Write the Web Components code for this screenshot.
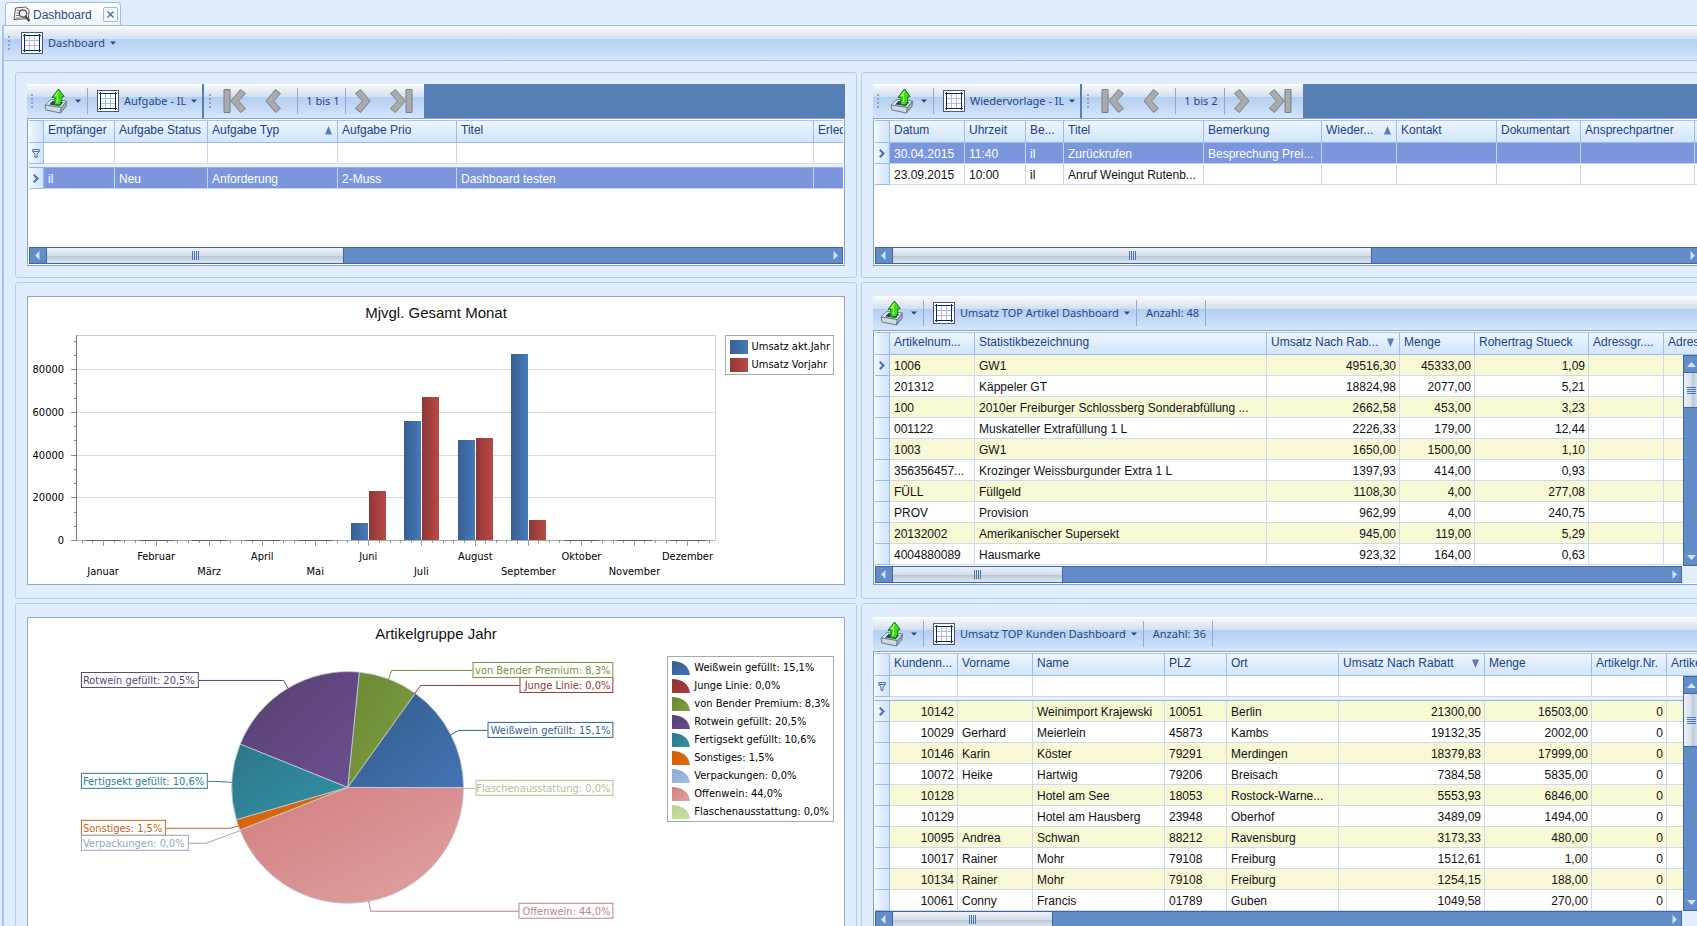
<!DOCTYPE html>
<html lang="de">
<head>
<meta charset="utf-8">
<title>Dashboard</title>
<style>
  html, body { height: 100%; margin: 0; overflow: hidden; }
  body {
    background: #e1edfd;
    color: #111;
    font: 12px/20px "Liberation Sans", Arial, sans-serif;
    --ink: #20418a;
    --line: #a9c5ea;
    --strip: linear-gradient(#fcfdfe 0, #eef2f7 4px, #d2deee 13px, #b3cff1 13px, #c2d8f5 23px, #d6e6fb 100%);
  }
</style>
</head>
<body>
<dash-window>
  <doc-tab slot="tabs">Dashboard</doc-tab>
  <tool-bar slot="bar" class="main">
    <tool-strip grip><tool-menu icon="table">Dashboard</tool-menu></tool-strip>
  </tool-bar>

  <dash-group>
    <tool-bar docked>
      <tool-strip grip boxed><tool-menu icon="export" label="Exportieren"></tool-menu><tool-sep></tool-sep><tool-menu icon="table">Aufgabe - IL</tool-menu></tool-strip>
      <record-nav>1 bis 1</record-nav>
    </tool-bar>
    <data-grid source="aufgaben"></data-grid>
  </dash-group>

  <dash-group>
    <tool-bar docked>
      <tool-strip grip boxed><tool-menu icon="export" label="Exportieren"></tool-menu><tool-sep></tool-sep><tool-menu icon="table">Wiedervorlage - IL</tool-menu></tool-strip>
      <record-nav>1 bis 2</record-nav>
    </tool-bar>
    <data-grid source="wiedervorlagen"></data-grid>
  </dash-group>

  <dash-group tall><bar-chart></bar-chart></dash-group>

  <dash-group tall>
    <tool-bar>
      <tool-strip><tool-menu icon="export" label="Exportieren"></tool-menu><tool-sep></tool-sep><tool-menu icon="table">Umsatz TOP Artikel Dashboard</tool-menu><tool-sep></tool-sep><tool-text>Anzahl: 48</tool-text><tool-sep></tool-sep></tool-strip>
    </tool-bar>
    <data-grid source="artikel"></data-grid>
  </dash-group>

  <dash-group tall><pie-chart></pie-chart></dash-group>

  <dash-group tall>
    <tool-bar>
      <tool-strip><tool-menu icon="export" label="Exportieren"></tool-menu><tool-sep></tool-sep><tool-menu icon="table">Umsatz TOP Kunden Dashboard</tool-menu><tool-sep></tool-sep><tool-text>Anzahl: 36</tool-text><tool-sep></tool-sep></tool-strip>
    </tool-bar>
    <data-grid source="kunden"></data-grid>
  </dash-group>
</dash-window>

<script>
const define = (name, render) => customElements.define(name, class extends HTMLElement {
  constructor() { super(); this.attachShadow({ mode: 'open' }); }
  connectedCallback() { this.shadowRoot.innerHTML = render(this); }
});

/* ---------- icons ---------- */
const ICONS = {
  table: `<svg width="22" height="22" viewBox="0 0 22 22" shape-rendering="crispEdges">
    <rect width="22" height="22" fill="#4a5a78"/><rect x="1" y="1" width="20" height="20" fill="#fff"/>
    <path d="M8.500 4v14M13.500 4v14M4 8.500h14M4 13.500h14" stroke="#a9b8ee" fill="none"/>
    <path d="M3.500 2v18M18.500 2v18M2 3.500h18M2 18.500h18" stroke="#10246e" fill="none"/></svg>`,
  export: `<svg width="24" height="26" viewBox="0 0 24 26">
    <path d="M1 17 7 11.500 22.500 13 17.500 19.500Z" fill="#e9f0f5" stroke="#6d7c88"/>
    <path d="M5 16.500 8.500 13 19.500 14 16 18Z" fill="#1d4668"/>
    <path d="M1 17 17.500 19.500 16.500 25 2 22Z" fill="#cfdae3" stroke="#6d7c88"/>
    <path d="M17.500 19.500 22.500 13 22 18.500 16.500 25Z" fill="#9cabb8" stroke="#6d7c88"/>
    <path d="M10 16.500c1-2 1.200-4 .8-7.500L8 9.500 14.500 1l5.700 7.500-2.500.5c.3 3.500-.2 6-2.200 8Z" fill="#3ddc12" stroke="#0c7a0a"/>
    <path d="M13 14.500c.8-2 .8-4 .4-7l-2 .2L14.500 3.500" fill="none" stroke="#b5ff8a" stroke-width="1.200"/></svg>`,
  search: `<svg width="18" height="17" viewBox="0 0 18 17">
    <path d="M2.500 2 12.500 1 16 3.500 15.500 12.500 1 13.500Z" fill="#fff" stroke="#555"/>
    <path d="M4 4.500h8M3.500 7h3M3 9.500h3M2.500 12h5" stroke="#777" fill="none"/>
    <circle cx="10" cy="7.500" r="3.700" fill="#e8eef6" stroke="#444" stroke-width="1.300"/>
    <path d="m12.500 10.500 4 4.500" stroke="#54462d" stroke-width="2.400"/></svg>`,
  caret: `<svg width="6" height="4" viewBox="0 0 6 4"><path d="M0 .5h6L3 3.800Z" fill="#234a8c"/></svg>`,
  filter: `<svg width="8" height="10" viewBox="0 0 8 10"><path d="M.7 1.500h6.600v2L5 6v3.300H3V6L.7 3.500Z" fill="#e6f0fc" stroke="#4f6fa8"/><path d="M1 3.500h6" stroke="#4f6fa8"/></svg>`,
  current: `<svg width="6" height="9" viewBox="0 0 6 9"><path d="m.8.8 3.700 3.700L.8 8.200" fill="none" stroke="#4b6fa5" stroke-width="2"/></svg>`,
};
const chevron = (pts) => `<path d="${pts}" fill="#a9aaac" stroke="#7d7f82" stroke-linejoin="round"/>`;
const NAV = {
  first: ['Erster', 24, 'M17.500 1.500 22.500 5.500 15.500 13 22.500 20.500 17.500 24.500 8 13Z', 'M1 1.500h6v23H1Z'],
  prev: ['Zurück', 17, 'M10.500 1.500 15.500 5.500 8.500 13 15.500 20.500 10.500 24.500 1 13Z', ''],
  next: ['Weiter', 17, 'M6.500 1.500 1.500 5.500 8.500 13 1.500 20.500 6.500 24.500 16 13Z', ''],
  last: ['Letzter', 24, 'M6.500 1.500 1.500 5.500 8.500 13 1.500 20.500 6.500 24.500 16 13Z', 'M17 1.500h6v23h-6Z'],
};
const navButton = (k) => {
  const [label, w, a, b] = NAV[k];
  return `<button class="${k}" aria-label="${label}"><svg width="${w}" height="26" viewBox="0 0 ${w} 26">${b ? chevron(b) : ''}${chevron(a)}</svg></button>`;
};
const BUTTON = `button { display: flex; align-items: center; margin: 0; padding: 0; border: 0; background: none; color: inherit; font: inherit; white-space: nowrap; }`;

/* ---------- window frame ---------- */
define('dash-window', () => `
  <style>
    :host { display: flex; flex-direction: column; min-height: 100%; }
    nav { display: flex; height: 25px; padding: 2px 0 0 5px; box-sizing: border-box; }
    .frame { flex: 1; border-top: 1px solid #9fbde6; border-left: 2px solid #a9c3ee; margin-left: 2px; }
    main { display: grid; grid-template-columns: minmax(0, 842fr) minmax(0, 853fr); gap: 4px; padding: 11px 0 0 11px; margin-right: -17px; }
  </style>
  <nav><slot name="tabs"></slot></nav>
  <div class="frame"><slot name="bar"></slot><main><slot></slot></main></div>`);

define('doc-tab', () => `
  <style>
    :host { display: flex; align-items: center; gap: 2px; height: 24px; box-sizing: border-box; padding: 0 2px 0 7px;
      border: 1px solid #9fbde6; border-bottom: 0; border-radius: 4px 4px 0 0; background: linear-gradient(#fff, #eef5fe); color: #2c4a8c; }
    a { color: inherit; text-decoration: none; }
    ${BUTTON}
    button { width: 15px; height: 15px; margin-left: 9px; justify-content: center; border: 1px solid #9db9e2; border-radius: 2px; }
  </style>
  ${ICONS.search}<a href="#"><slot></slot></a>
  <button aria-label="Schließen"><svg width="7" height="7" viewBox="0 0 7 7"><path d="m.5.500 6 6m0-6-6 6" stroke="#47689f" stroke-width="1.300"/></svg></button>`);

define('dash-group', () => `
  <style>
    :host { display: flex; flex-direction: column; min-width: 0; box-sizing: border-box; padding: 11px; border: 1px solid #b3cdee; border-radius: 3px; }
    :host([tall]) { padding: 13px 11px; }
  </style><slot></slot>`);

/* ---------- tool bars ---------- */
define('tool-bar', () => `
  <style>
    :host { display: flex; height: 34px; background: var(--strip); color: #1f468c; font: 11px/20px "Noto Sans", "Segoe UI", sans-serif; }
    :host([docked]) { background: #557fb5; }
    :host(.main) { border-bottom: 1px solid #a4c1e9; }
  </style><slot></slot>`);

define('tool-strip', (el) => `
  <style>
    :host { display: flex; align-items: center; padding-left: 7px; }
    :host([grip]) { padding-left: 4px; }
    :host([boxed]) { background: var(--strip); padding-right: 5px; }
    i { width: 2px; height: 15px; margin-right: 11px; background: repeating-linear-gradient(#8aa5cf 0 2px, transparent 2px 4px); }
  </style>${el.hasAttribute('grip') ? '<i></i>' : ''}<slot></slot>`);

define('tool-sep', () => `<style>:host { align-self: stretch; width: 1px; margin: 4px 9px 4px 6px; background: #8fabd3; }</style>`);
define('tool-text', () => `<style>:host { white-space: nowrap; }</style><slot></slot>`);

define('tool-menu', (el) => `
  <style>
    :host { display: flex; align-items: center; }
    ${BUTTON}
    span { margin: 0 5px; }
    .export { margin: 0 4px 0 3px; }
  </style>
  <button aria-haspopup="menu" ${el.getAttribute('label') ? `aria-label="${el.getAttribute('label')}"` : ''}>
    ${ICONS[el.getAttribute('icon')]}<span class="${el.getAttribute('icon')}"><slot></slot></span>${ICONS.caret}
  </button>`);

define('record-nav', () => `
  <style>
    :host { display: flex; align-items: center; margin-left: 2px; padding: 0 11px 0 5px; background: var(--strip); }
    i { width: 2px; height: 15px; margin-right: 12px; background: repeating-linear-gradient(#8aa5cf 0 2px, transparent 2px 4px); }
    ${BUTTON}
    .first, .next { margin-right: 18px; }
    .prev { margin-right: 9px; }
    tool-sep { margin-right: 8px; }
  </style>
  <i></i>${navButton('first')}${navButton('prev')}<tool-sep></tool-sep><slot></slot><tool-sep></tool-sep>${navButton('next')}${navButton('last')}`);

/* ---------- scroll bar ---------- */
define('scroll-bar', (el) => {
  const v = el.hasAttribute('vertical');
  const arrow = (d) => `<svg width="7" height="9" viewBox="0 0 7 9"><path d="${d}" fill="#cfe3fb"/></svg>`;
  const arrowV = (d) => `<svg width="9" height="5" viewBox="0 0 9 5"><path d="${d}" fill="#cfe3fb"/></svg>`;
  return `
  <style>
    :host { display: flex; height: 17px; box-sizing: border-box; border: 1px solid #40669f; background: #628dc8; }
    :host([vertical]) { flex-direction: column; width: 17px; height: auto; }
    ${BUTTON}
    button { flex: none; justify-content: center; width: 16px; height: 100%; }
    :host([vertical]) button { width: 100%; height: 16px; }
    .thumb { display: flex; align-items: center; justify-content: center; flex: none; width: ${v ? 'auto' : el.getAttribute('thumb') + 'px'}; height: ${v ? el.getAttribute('thumb') + 'px' : 'auto'};
      border: solid #40669f; border-width: ${v ? '1px 0' : '0 1px'}; box-sizing: border-box;
      background: linear-gradient(${v ? '90deg' : '180deg'}, #eef2f7, #d3dde9 50%, #b7c5d8 52%, #dfe8f2); }
    .thumb::before { content: ""; width: ${v ? '9px' : '7px'}; height: ${v ? '7px' : '9px'}; background: repeating-linear-gradient(${v ? '180deg' : '90deg'}, #4d74ab 0 1px, transparent 1px 2px); }
    .rest { flex: 1; }
  </style>
  <button aria-label="${v ? 'Nach oben' : 'Nach links'}">${v ? arrowV('M0 5 4.500 0 9 5Z') : arrow('M4.500 0v9L0 4.500Z')}</button>
  <div class="thumb"></div><div class="rest"></div>
  <button aria-label="${v ? 'Nach unten' : 'Nach rechts'}">${v ? arrowV('M0 0h9L4.500 5Z') : arrow('M2.500 0v9L7 4.500Z')}</button>`;
});

/* ---------- data grids ---------- */
const GRIDS = {
  aufgaben: {
    height: 127, thumb: 298, filter: true, selected: 0,
    cols: [['Empfänger', 71], ['Aufgabe Status', 93], ['Aufgabe Typ', 130, 'up'], ['Aufgabe Prio', 119], ['Titel', 357], ['Erledigt', 90]],
    rows: [['il', 'Neu', 'Anforderung', '2-Muss', 'Dashboard testen', '']],
  },
  wiedervorlagen: {
    height: 127, thumb: 480, selected: 0,
    cols: [['Datum', 75], ['Uhrzeit', 61], ['Be...', 38], ['Titel', 140], ['Bemerkung', 118], ['Wieder...', 75, 'up'], ['Kontakt', 100], ['Dokumentart', 84], ['Ansprechpartner', 114], ['', 60]],
    rows: [
      ['30.04.2015', '11:40', 'il', 'Zurückrufen', 'Besprechung Prei...', '', '', '', '', ''],
      ['23.09.2015', '10:00', 'il', 'Anruf Weingut Rutenb...', '', '', '', '', '', ''],
    ],
  },
  artikel: {
    height: 234, thumb: 171, vthumb: 36, striped: true, right: [2, 3, 4],
    cols: [['Artikelnum...', 85], ['Statistikbezeichnung', 292], ['Umsatz Nach Rab...', 133, 'down'], ['Menge', 75], ['Rohertrag Stueck', 114], ['Adressgr....', 75], ['Adresse', 100]],
    rows: [
      ['1006', 'GW1', '49516,30', '45333,00', '1,09', '', ''],
      ['201312', 'Käppeler GT', '18824,98', '2077,00', '5,21', '', ''],
      ['100', '2010er Freiburger Schlossberg Sonderabfüllung ...', '2662,58', '453,00', '3,23', '', ''],
      ['001122', 'Muskateller Extrafüllung 1 L', '2226,33', '179,00', '12,44', '', ''],
      ['1003', 'GW1', '1650,00', '1500,00', '1,10', '', ''],
      ['356356457...', 'Krozinger Weissburgunder Extra 1 L', '1397,93', '414,00', '0,93', '', ''],
      ['FÜLL', 'Füllgeld', '1108,30', '4,00', '277,08', '', ''],
      ['PROV', 'Provision', '962,99', '4,00', '240,75', '', ''],
      ['20132002', 'Amerikanischer Supersekt', '945,00', '119,00', '5,29', '', ''],
      ['4004880089', 'Hausmarke', '923,32', '164,00', '0,63', '', ''],
    ],
  },
  kunden: {
    height: 258, thumb: 161, vthumb: 54, striped: true, filter: true, right: [0, 5, 6, 7],
    cols: [['Kundenn...', 68], ['Vorname', 75], ['Name', 132], ['PLZ', 62], ['Ort', 112], ['Umsatz Nach Rabatt', 146, 'down'], ['Menge', 107], ['Artikelgr.Nr.', 75], ['Artikelgr.', 100]],
    rows: [
      ['10142', '', 'Weinimport Krajewski', '10051', 'Berlin', '21300,00', '16503,00', '0', ''],
      ['10029', 'Gerhard', 'Meierlein', '45873', 'Kambs', '19132,35', '2002,00', '0', ''],
      ['10146', 'Karin', 'Köster', '79291', 'Merdingen', '18379,83', '17999,00', '0', ''],
      ['10072', 'Heike', 'Hartwig', '79206', 'Breisach', '7384,58', '5835,00', '0', ''],
      ['10128', '', 'Hotel am See', '18053', 'Rostock-Warne...', '5553,93', '6846,00', '0', ''],
      ['10129', '', 'Hotel am Hausberg', '23948', 'Oberhof', '3489,09', '1494,00', '0', ''],
      ['10095', 'Andrea', 'Schwan', '88212', 'Ravensburg', '3173,33', '480,00', '0', ''],
      ['10017', 'Rainer', 'Mohr', '79108', 'Freiburg', '1512,61', '1,00', '0', ''],
      ['10134', 'Rainer', 'Mohr', '79108', 'Freiburg', '1254,15', '188,00', '0', ''],
      ['10061', 'Conny', 'Francis', '01789', 'Guben', '1049,58', '270,00', '0', ''],
    ],
  },
};
const SORT = {
  up: '<svg width="7" height="9" viewBox="0 0 7 9"><path d="M0 8.500h7L3.500 0Z" fill="#5b7db4"/></svg>',
  down: '<svg width="7" height="9" viewBox="0 0 7 9"><path d="M0 .5h7L3.500 9Z" fill="#5b7db4"/></svg>',
};

define('data-grid', (el) => {
  const g = GRIDS[el.getAttribute('source')];
  const right = g.right || [];
  const total = 15 + g.cols.reduce((s, c) => s + c[1], 0);
  return `
  <style>
    :host { display: flex; flex-direction: column; flex: 1; position: relative; padding: 1px; border: 1px solid #7fa3d3; background: #fff; }
    .view { flex: 1; min-height: ${g.height}px; overflow: hidden; }
    table { width: ${total}px; table-layout: fixed; border-collapse: separate; border-spacing: 0; }
    th, td { box-sizing: border-box; height: 21px; padding: 3px 3px 0 4px; border: solid #cbdaee; border-width: 0 1px 1px 0; line-height: 17px; text-align: left; font-weight: normal; white-space: nowrap; overflow: hidden; }
    .head th { height: 23px; padding-top: 0; padding-bottom: 2px; line-height: 19px; color: var(--ink); background: linear-gradient(#eff6fe, #dcebfc 60%, #d3e6fc); border-color: #9dbbe4; border-top: 1px solid #a9c5ea; }
    th > div { display: flex; align-items: center; justify-content: space-between; padding-right: 2px; }
    tr > :first-child { padding: 0; border-color: #9dbbe4; background: linear-gradient(90deg, #f1f7fe, #d0e3fb); color: var(--ink); }
    tr > :first-child svg { display: block; margin: auto; }
    .n { text-align: right; }
    .striped tr:nth-child(odd) td { background: #f8f8d4; }
    .sel td { background: #7b96dd; color: #fff; border-color: #c6d4f4; }
    .filter td { padding: 0; }
    .band td { height: 4px; padding: 0; border: solid #93b3df; border-width: 0 0 1px; background: #e6effa; line-height: 0; }
    input { display: block; box-sizing: border-box; width: 100%; height: 20px; margin: 0; padding: 0 5px; border: 0; background: none; font: inherit; }
    .corner { display: flex; background: #e3eefd; }
    .corner scroll-bar:first-child { flex: 1; }
    .pad { width: 18px; }
    .v { position: absolute; top: 24px; right: 1px; bottom: 18px; }
  </style>
  <div class="view"><table>
    <colgroup><col style="width:15px">${g.cols.map(c => `<col style="width:${c[1]}px">`).join('')}</colgroup>
    <thead>
      <tr class="head"><th></th>${g.cols.map(c => `<th scope="col">${c[2] ? `<div>${c[0]}${SORT[c[2]]}</div>` : c[0]}</th>`).join('')}</tr>
      ${g.filter ? `<tr class="filter"><th>${ICONS.filter}</th>${g.cols.map(c => `<td><input aria-label="Filter ${c[0]}"></td>`).join('')}</tr><tr class="band"><td colspan="${g.cols.length + 1}"></td></tr>` : ''}
    </thead>
    <tbody class="${g.striped ? 'striped' : ''}">
      ${g.rows.map((r, i) => `<tr class="${g.selected === i ? 'sel' : ''}"><th scope="row">${i === 0 ? ICONS.current : ''}</th>${r.map((t, j) => `<td class="${right.includes(j) ? 'n' : ''}">${t}</td>`).join('')}</tr>`).join('')}
    </tbody>
  </table></div>
  <div class="corner"><scroll-bar thumb="${g.thumb}"></scroll-bar>${g.vthumb ? '<div class="pad"></div>' : ''}</div>
  ${g.vthumb ? `<scroll-bar vertical class="v" thumb="${g.vthumb}"></scroll-bar>` : ''}`;
});

/* ---------- charts ---------- */
const CHART_CSS = `
  :host { display: block; flex: 1; border: 1px solid #8fa8c9; background: #fff; font: 11px/18px "DejaVu Sans Condensed", Tahoma, sans-serif; color: #000; }
  h2 { margin: 0; padding-top: 6px; height: 27px; font: 15px/20px "Liberation Sans", Arial, sans-serif; text-align: center; color: #111; }
  .body { display: flex; align-items: flex-start; gap: 8px; padding-right: 10px; }
  .plot { flex: 1; min-width: 0; display: block; }
  chart-legend { margin-top: 5px; }
  text { font-size: 11px; }`;

define('chart-legend', () => `<style>:host { display: block; box-sizing: border-box; flex: none; padding: 2px 3px 0 4px; border: 1px solid #a5a8ad; }</style><slot></slot>`);
define('legend-item', () => `<style>:host { display: flex; align-items: center; gap: 4px; height: 18px; white-space: nowrap; }</style><slot name="swatch"></slot><slot></slot>`);

define('bar-chart', () => {
  const months = ['Januar', 'Februar', 'März', 'April', 'Mai', 'Juni', 'Juli', 'August', 'September', 'Oktober', 'November', 'Dezember'];
  const now = [0, 0, 0, 0, 0, 8000, 55700, 46900, 87200, 0, 0, 0];
  const before = [0, 0, 0, 0, 0, 23000, 67000, 47800, 9500, 0, 0, 0];
  const y0 = 540, left = 76, right = 714, top = 335;
  const y = (v) => Math.round(y0 - v * 42.7 / 20000);
  const x = (i) => Math.round(103 + i * 53.08);
  let s = '';
  for (let v = 20000; v <= 80000; v += 20000) s += `<path d="M${left} ${y(v)}.500H${right}" stroke="#d9d9d9"/>`;
  s += `<path d="M${left} ${top}.500H${right}.500V${y0}" fill="none" stroke="#cfcfcf"/>`;
  for (let k = 0; k <= 14; k++) {
    const major = k % 3 === 0, ty = y(k * 20000 / 3);
    s += `<path d="M${left - (major ? 5 : 2)} ${ty}.500H${left}" stroke="#8a8a8a"/>`;
    if (major) s += `<text x="64" y="${ty + 4}" text-anchor="end">${k * 20000 / 3}</text>`;
  }
  for (let k = -2; k <= 57; k++) s += `<path d="M${Math.round(103 + k * 10.616)}.500 ${y0}v${k % 5 === 0 ? 6 : 3}" stroke="#9a9a9a"/>`;
  months.forEach((m, i) => {
    const c = x(i);
    const bar = (v, bx, fill, dark) => v ? `<rect x="${bx}" y="${y(v)}" width="17" height="${y0 - y(v)}" fill="url(#${fill})"/>` : `<rect x="${bx}" y="${y0}" width="17" height="1" fill="${dark}"/>`;
    s += bar(now[i], c - 17, 'b', '#2c4468') + bar(before[i], c + 1, 'r', '#6b3232');
    s += `<text x="${c}" y="${i % 2 ? 560 : 575}" text-anchor="middle">${m}</text>`;
  });
  const sw = (id, a, b) => `<svg slot="swatch" width="18" height="14"><defs><linearGradient id="${id}"><stop stop-color="${a}"/><stop offset="1" stop-color="${b}"/></linearGradient></defs><rect width="18" height="14" fill="url(#${id})"/></svg>`;
  return `<style>${CHART_CSS}</style>
  <h2>Mjvgl. Gesamt Monat</h2>
  <div class="body">
    <svg class="plot" viewBox="28 330 688 254">
      <defs><linearGradient id="b"><stop stop-color="#385f93"/><stop offset="1" stop-color="#477bb8"/></linearGradient>
      <linearGradient id="r"><stop stop-color="#8f3836"/><stop offset="1" stop-color="#bb4a47"/></linearGradient></defs>
      <g shape-rendering="crispEdges">${s}<path d="M${left}.500 ${top}V${y0}" stroke="#777"/><path d="M${left} ${y0}.500H${right}" stroke="#777" stroke-opacity=".6"/></g>
    </svg>
    <chart-legend>
      <legend-item>${sw('now', '#385f93', '#477bb8')}Umsatz akt.Jahr</legend-item>
      <legend-item>${sw('before', '#8f3836', '#bb4a47')}Umsatz Vorjahr</legend-item>
    </chart-legend>
  </div>`;
});

define('pie-chart', () => {
  /* name, percent, dark shade, light shade, label colour, label [x, y, width], leader line */
  const slices = [
    ['Weißwein gefüllt', 15.1, '#355c8c', '#4273b2', '#345f97', [488, 722, 126], 'M488 730.500H459L451 735'],
    ['Junge Linie', 0, '#8c3433', '#a93f3d', '#8f3637', [520, 677, 94], 'M520 685.500H421L415 694'],
    ['von Bender Premium', 8.3, '#6c8834', '#7f9f40', '#76923c', [473, 662, 141], 'M473 670.500H392L389 679'],
    ['Rotwein gefüllt', 20.5, '#574070', '#6b4f90', '#5b4480', [81, 672, 118], 'M199 680.500H284L288 688'],
    ['Fertigsekt gefüllt', 10.6, '#2b7687', '#3592a8', '#2c7f90', [81, 773, 127], 'M208 781.500H216L232 782.500'],
    ['Sonstiges', 1.5, '#cf5f06', '#e06c0c', '#c8601c', [81, 820, 85], 'M166 828.500H230L239 826'],
    ['Verpackungen', 0, '#8ba9d3', '#a6bfe2', '#93a6c3', [81, 835, 108], 'M189 843.500H206L240 831'],
    ['Offenwein', 44, '#d27f7e', '#dfa2a2', '#b98388', [519, 903, 95], 'M519 911.500H371L369 901'],
    ['Flaschenausstattung', 0, '#b9d48c', '#cbdfa8', '#b2c095', [476, 780, 138], 'M476 788.500H463'],
  ];
  const cx = 348, cy = 787.6, r = 116;
  const fmt = (v) => v.toFixed(1).replace('.', ',') + '%';
  const at = (p) => { const a = p / 100 * 2 * Math.PI; return `${(cx + r * Math.cos(a)).toFixed(2)} ${(cy - r * Math.sin(a)).toFixed(2)}`; };
  let sum = 0, wedges = '', labels = '', defs = '', legend = '';
  slices.forEach(([name, pct, dark, light, ink, [bx, by, bw], line], i) => {
    defs += `<linearGradient id="p${i}" x2="1" y2="1"><stop stop-color="${dark}"/><stop offset="1" stop-color="${light}"/></linearGradient>`;
    if (pct) wedges += `<path d="M${cx} ${cy}L${at(sum)}A${r} ${r} 0 0 0 ${at(sum + pct)}Z" fill="url(#p${i})" stroke="#c3cbdc" stroke-width=".8"/>`;
    sum += pct;
    const text = `${name}: ${fmt(pct)}`, leftSide = bx < 348;
    labels += `<path d="${line}" fill="none" stroke="${ink}"/><rect x="${bx}.500" y="${by}.500" width="${bw - 1}" height="15" fill="#fff" stroke="${ink}"/>
      <text x="${leftSide ? bx + 2 : bx + bw - 3}" y="${by + 12}" text-anchor="${leftSide ? 'start' : 'end'}" fill="${ink}">${text}</text>`;
    legend += `<legend-item><svg slot="swatch" width="18" height="14"><defs><linearGradient id="q${i}" x2="1" y2="1"><stop stop-color="${dark}"/><stop offset="1" stop-color="${light}"/></linearGradient></defs><path d="M0 14V0C10 0 17 5 18 14Z" fill="url(#q${i})"/></svg>${text}</legend-item>`;
  });
  return `<style>${CHART_CSS}</style>
  <h2>Artikelgruppe Jahr</h2>
  <div class="body">
    <svg class="plot" viewBox="28 651 632 277"><defs>${defs}</defs>${wedges}${labels}</svg>
    <chart-legend>${legend}</chart-legend>
  </div>`;
});
</script>
</body>
</html>
